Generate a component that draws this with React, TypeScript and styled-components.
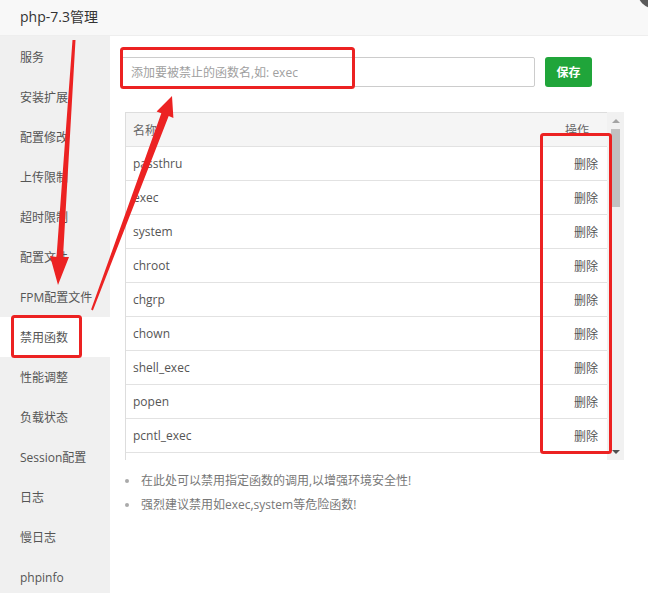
import React from "react";
import styled, { createGlobalStyle } from "styled-components";

const Global = createGlobalStyle`
  html, body { margin: 0; padding: 0; background: #fff; }
  body { font-family: "Open Sans", "Noto Sans CJK SC", sans-serif; }
  * { box-sizing: border-box; }
`;

const Win = styled.div`
  position: relative;
  width: 648px;
  height: 593px;
  overflow: hidden;
  background: #fff;
  display: flex;
  flex-direction: column;
`;

const TitleBar = styled.div`
  height: 36px;
  flex: none;
  padding-left: 20px;
  line-height: 33px;
  font-size: 14px;
  color: #333;
  background: #f8f8f8;
  border-bottom: 1px solid #eee;
`;

const CloseDot = styled.div`
  position: absolute;
  top: -22px;
  right: -20px;
  width: 30px;
  height: 30px;
  border-radius: 50%;
  background: #5a5a5a;
`;

const Body = styled.div`
  flex: 1;
  display: flex;
  min-height: 0;
`;

const Menu = styled.div`
  width: 110px;
  flex: none;
  background: #f0f0f0;
  padding-top: 1px;
  display: flex;
  flex-direction: column;
`;

const MenuItem = styled.div<{ $active?: boolean }>`
  height: 40px;
  line-height: 42px;
  padding-left: 20px;
  font-size: 12px;
  color: #555;
  white-space: nowrap;
  background: ${(p) => (p.$active ? "#fff" : "transparent")};
`;

const Content = styled.div`
  flex: 1;
  padding: 21px 0 0 11px;
  display: flex;
  flex-direction: column;
`;

const FormRow = styled.div`
  display: flex;
  align-items: center;
  gap: 10px;
`;

const Input = styled.input`
  width: 414px;
  height: 30px;
  border: 1px solid #ccc;
  border-radius: 2px;
  padding: 0 9px;
  font-size: 12px;
  font-family: inherit;
  outline: none;
  &::placeholder { color: #a0a0a0; }
`;

const SaveBtn = styled.button`
  width: 47px;
  height: 30px;
  border: none;
  border-radius: 3px;
  background: #20a53a;
  color: #fff;
  font-size: 12px;
  font-weight: bold;
  font-family: inherit;
  padding: 0;
`;

const TableBox = styled.div`
  margin: 25px 0 0 4px;
  width: 499px;
  height: 348px;
  display: flex;
`;

const TableScroll = styled.div`
  flex: 1;
  overflow: hidden;
  border-left: 1px solid #ddd;
`;

const Table = styled.table`
  width: 100%;
  border-collapse: collapse;
  font-size: 12px;
`;

const Th = styled.th<{ $right?: boolean }>`
  height: 34px;
  padding: 0 ${(p) => (p.$right ? "18px" : "7px")} 0 7px;
  background: #f5f5f5;
  border-top: 1px solid #ddd;
  border-bottom: 1px solid #e2e2e2;
  color: #666;
  font-weight: normal;
  text-align: ${(p) => (p.$right ? "right" : "left")};
`;

const Td = styled.td<{ $right?: boolean }>`
  height: 34px;
  padding: 0 ${(p) => (p.$right ? "9px" : "7px")} 0 7px;
  border-bottom: 1px solid #e2e2e2;
  color: #555;
  text-align: ${(p) => (p.$right ? "right" : "left")};
`;

const ScrollBar = styled.div`
  width: 17px;
  flex: none;
  background: #f1f1f1;
  display: flex;
  flex-direction: column;
  align-items: center;
`;

const ScrollArrow = styled.div<{ $down?: boolean }>`
  height: 17px;
  width: 17px;
  display: flex;
  align-items: center;
  justify-content: center;
  &::before {
    content: "";
    border-left: 4px solid transparent;
    border-right: 4px solid transparent;
    ${(p) =>
      p.$down
        ? "border-top: 4px solid #505050;"
        : "border-bottom: 4px solid #a3a3a3;"}
  }
`;

const ScrollTrack = styled.div`
  flex: 1;
  width: 100%;
  display: flex;
  flex-direction: column;
  align-items: center;
`;

const Thumb = styled.div`
  width: 9px;
  height: 78px;
  background: #c1c1c1;
`;

const Notes = styled.ul`
  margin: 9px 0 0 4px;
  padding: 0 0 0 16px;
  list-style: none;
`;

const Note = styled.li`
  position: relative;
  font-size: 12px;
  line-height: 24px;
  color: #777;
  &::before {
    content: "";
    position: absolute;
    left: -16px;
    top: 10px;
    width: 4px;
    height: 4px;
    border-radius: 50%;
    background: #aaa;
  }
`;

const Overlay = styled.svg`
  position: absolute;
  left: 0;
  top: 0;
  width: 648px;
  height: 593px;
  pointer-events: none;
`;

const menu = [
  "服务",
  "安装扩展",
  "配置修改",
  "上传限制",
  "超时限制",
  "配置文件",
  "FPM配置文件",
  "禁用函数",
  "性能调整",
  "负载状态",
  "Session配置",
  "日志",
  "慢日志",
  "phpinfo",
];

const funcs = [
  "passthru",
  "exec",
  "system",
  "chroot",
  "chgrp",
  "chown",
  "shell_exec",
  "popen",
  "pcntl_exec",
];

export default function App() {
  return (
    <>
      <Global />
      <Win>
        <TitleBar>php-7.3管理</TitleBar>
        <CloseDot />
        <Body>
          <Menu>
            {menu.map((m) => (
              <MenuItem key={m} $active={m === "禁用函数"}>
                {m}
              </MenuItem>
            ))}
          </Menu>
          <Content>
            <FormRow>
              <Input placeholder="添加要被禁止的函数名,如: exec" />
              <SaveBtn>保存</SaveBtn>
            </FormRow>
            <TableBox>
              <TableScroll>
                <Table>
                  <thead>
                    <tr>
                      <Th>名称</Th>
                      <Th $right>操作</Th>
                    </tr>
                  </thead>
                  <tbody>
                    {funcs.map((f) => (
                      <tr key={f}>
                        <Td>{f}</Td>
                        <Td $right>删除</Td>
                      </tr>
                    ))}
                  </tbody>
                </Table>
              </TableScroll>
              <ScrollBar>
                <ScrollArrow />
                <ScrollTrack>
                  <Thumb />
                </ScrollTrack>
                <ScrollArrow $down />
              </ScrollBar>
            </TableBox>
            <Notes>
              <Note>在此处可以禁用指定函数的调用,以增强环境安全性!</Note>
              <Note>强烈建议禁用如exec,system等危险函数!</Note>
            </Notes>
          </Content>
        </Body>
        <Overlay viewBox="0 0 648 593">
          <g fill="none" stroke="#ec2222" strokeWidth="3">
            <rect x="121.5" y="48.5" width="232" height="39" rx="2" />
            <rect x="12.5" y="316.5" width="68" height="40" rx="2" />
            <rect x="541.5" y="134.5" width="69" height="318" rx="2" />
          </g>
          <g fill="#ec2222">
            <polygon points="72.5,40 75.5,40 63,257 69,257 58,285 50,256 56.5,257" />
            <polygon points="91.1,309.6 161.3,113.3 156.6,111.5 172,96 173.4,117.9 168.7,116.1 92.9,310.4" />
          </g>
        </Overlay>
      </Win>
    </>
  );
}
